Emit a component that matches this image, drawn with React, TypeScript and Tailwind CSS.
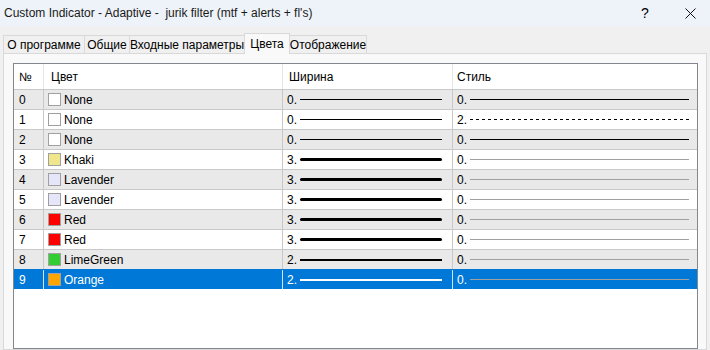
import React from "react";

type Row = {
  name: string;
  color: string;
  width: number;
  style: number;
};

const rows: Row[] = [
  { name: "None", color: "#ffffff", width: 0, style: 0 },
  { name: "None", color: "#ffffff", width: 0, style: 2 },
  { name: "None", color: "#ffffff", width: 0, style: 0 },
  { name: "Khaki", color: "#f0e68c", width: 3, style: 0 },
  { name: "Lavender", color: "#e6e6fa", width: 3, style: 0 },
  { name: "Lavender", color: "#e6e6fa", width: 3, style: 0 },
  { name: "Red", color: "#ff0000", width: 3, style: 0 },
  { name: "Red", color: "#ff0000", width: 3, style: 0 },
  { name: "LimeGreen", color: "#32cd32", width: 2, style: 0 },
  { name: "Orange", color: "#ffa500", width: 2, style: 0 },
];

const tabs = [
  { label: "О программе", w: "w-[82px]" },
  { label: "Общие", w: "w-[46px]" },
  { label: "Входные параметры", w: "w-[116px]" },
  { label: "Цвета", w: "w-[46px]", active: true },
  { label: "Отображение", w: "w-[78px]" },
];

const WidthLine = ({ width, selected }: { width: number; selected: boolean }) => {
  const h = width === 3 ? "h-[3px] rounded-full" : width === 2 ? "h-[2px]" : "h-px";
  return <div className={`flex-1 mr-[10px] ${h} ${selected ? "bg-white" : "bg-black"}`} />;
};

const StyleLine = ({ row, index }: { row: Row; index: number }) => {
  if (row.style === 2) {
    return (
      <div className="flex-1 min-w-0 mr-[8px] h-px">
        <svg width="100%" height="1" className="block">
          <line x1="0" y1="0.5" x2="100%" y2="0.5" stroke="#000" strokeWidth="1" strokeDasharray="3 3" />
        </svg>
      </div>
    );
  }
  const dark = index < 3;
  return <div className={`flex-1 mr-[8px] h-px ${dark ? "bg-black" : "bg-[#a0a0a0]"}`} />;
};

export default function App() {
  return (
    <div
      className="w-[710px] h-[350px] overflow-hidden bg-[#f0f0f0] text-[12px] text-black flex flex-col"
      style={{ fontFamily: '"Liberation Sans", Arial, sans-serif' }}
    >
      {/* title bar */}
      <div className="h-[26px] bg-[#eef3f9] flex items-center justify-between pl-[4px] shrink-0">
        <span className="text-[12px] whitespace-pre text-[#1a1a1a]">
          Custom Indicator - Adaptive -  jurik filter (mtf + alerts + fl's)
        </span>
        <div className="flex items-center h-full">
          <span className="w-[50px] text-center text-[14px]">?</span>
          <span className="w-[40px] flex justify-center">
            <svg width="11" height="11" viewBox="0 0 11 11">
              <path d="M0.5 0.5 L10.5 10.5 M10.5 0.5 L0.5 10.5" stroke="#111" strokeWidth="1" />
            </svg>
          </span>
        </div>
      </div>

      {/* tabs */}
      <div className="flex items-end pl-[3px] mt-[7px] h-[20px] shrink-0">
        {tabs.map((t, i) =>
          t.active ? (
            <div
              key={t.label}
              className={`${t.w} h-[21px] -mb-px -ml-px relative z-10 bg-[#f9f9f9] border border-b-0 border-[#d9d9d9] flex items-center justify-center whitespace-nowrap`}
            >
              {t.label}
            </div>
          ) : (
            <div
              key={t.label}
              className={`${t.w} h-[18px] ${i === 0 ? "" : "-ml-px"} bg-[#f0f0f0] border border-b-0 border-[#d9d9d9] flex items-center justify-center whitespace-nowrap`}
            >
              {t.label}
            </div>
          )
        )}
      </div>

      {/* panel */}
      <div className="mx-[3px] flex-1 border border-[#d9d9d9] bg-[#f9f9f9] pt-[9px] pl-[9px] pr-[8px] flex flex-col">
        <div className="flex-1 border border-[#828790] bg-white">
          {/* header */}
          <div className="flex h-[25px] items-center">
            <div className="w-[30px] h-full border-r border-[#e5e5e5] pl-[5px] flex items-center">№</div>
            <div className="w-[239px] h-full border-r border-[#e5e5e5] pl-[7px] flex items-center">Цвет</div>
            <div className="w-[170px] h-full border-r border-[#e5e5e5] pl-[6px] flex items-center">Ширина</div>
            <div className="flex-1 h-full pl-[4px] flex items-center">Стиль</div>
          </div>

          {rows.map((row, i) => {
            const selected = i === 9;
            const bg = selected
              ? "bg-[#0078d7] text-white border-[#0078d7]"
              : i % 2 === 0
              ? "bg-[#e9e9e9] border-[#c8c8c8]"
              : "bg-white border-[#c8c8c8]";
            const sep = selected ? "border-[#cfe4f7]" : "border-[#c8c8c8]";
            return (
              <div key={i} className={`flex h-[20px] border-t ${bg}`}>
                <div className={`w-[30px] shrink-0 border-r ${sep} pl-[5px] flex items-center`}>{i}</div>
                <div className={`w-[239px] shrink-0 border-r ${sep} pl-[4px] flex items-center`}>
                  <span
                    className="w-[13px] h-[13px] border border-[#a0a0a0] mr-[3px] shrink-0"
                    style={{ backgroundColor: row.color }}
                  />
                  {row.name}
                </div>
                <div className={`w-[170px] shrink-0 border-r ${sep} pl-[4px] flex items-center`}>
                  <span className="w-[13px] shrink-0">{row.width}.</span>
                  <WidthLine width={row.width} selected={selected} />
                </div>
                <div className="flex-1 min-w-0 pl-[4px] flex items-center">
                  <span className="w-[13px] shrink-0">{row.style}.</span>
                  <StyleLine row={row} index={i} />
                </div>
              </div>
            );
          })}
        </div>
      </div>
    </div>
  );
}
